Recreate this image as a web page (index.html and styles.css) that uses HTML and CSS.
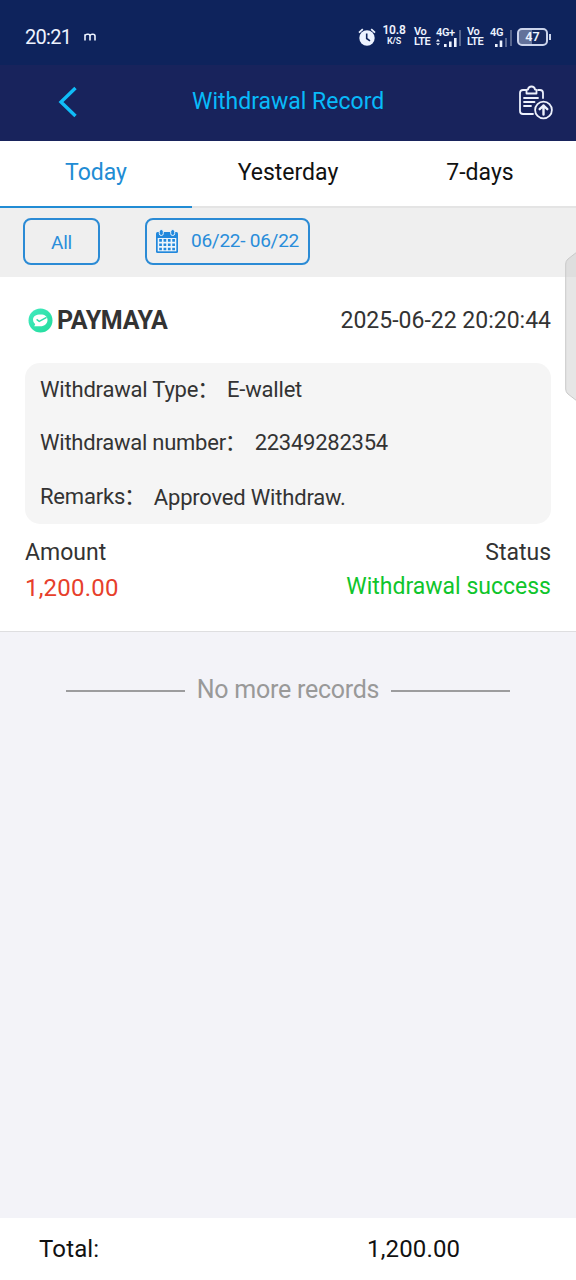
FILE: index.html
```html
<!DOCTYPE html>
<html lang="en">
<head>
<meta charset="utf-8">
<title>Withdrawal Record</title>
<link rel="stylesheet" href="styles.css">
</head>
<body>
<div class="screen">
  <div class="status-bar">
    <span class="clock">20:21</span>
    <svg class="notif" width="12" height="8" viewBox="0 0 12 8"><path d="M1 7.5V1.2M1 3Q1.2 1.2 3.4 1.2H4.3Q6 1.2 6 3V7.5M6 3Q6.2 1.2 8 1.2H9Q11 1.2 11 3V7.5"/></svg>
    <div class="indicators">
      <svg class="alarm" width="18" height="18" viewBox="0 0 18 18"><circle cx="9" cy="10" r="7.7" fill="#edf3ff"/><path d="M1 4.6 4.8 1.2M17 4.6 13.2 1.2" stroke="#edf3ff" stroke-width="1.8"/><path d="M8.7 5.5V10.5L12 12.8" fill="none" stroke="#10245b" stroke-width="1.6"/></svg>
      <div class="stack speed"><b>10.8</b><small>K/S</small></div>
      <div class="stack volte"><b>Vo</b><b>LTE</b></div>
      <div class="stack signal first"><b>4G+</b>
        <svg width="24" height="9" viewBox="0 0 24 9"><path d="M0 3.4 2 1 4 3.4ZM0 5.2H4L2 7.6ZM8 6h2.6v3H8ZM13 3.5h2.6V9H13ZM18 0h2.6v9H18Z" fill="#edf3ff"/></svg></div>
      <svg class="tall-bar" width="2" height="16"><rect width="2" height="16" fill="#58678f"/></svg>
      <div class="stack volte second"><b>Vo</b><b>LTE</b></div>
      <div class="stack signal"><b>4G</b>
        <svg width="18" height="9" viewBox="0 0 18 9"><path d="M5 6h2.6v3H5ZM9.7 2.5h2.6V9H9.7Z" fill="#edf3ff"/><path d="M15 0h2v9h-2Z" fill="#58678f"/></svg></div>
      <svg class="tall-bar" width="2" height="16"><rect width="2" height="16" fill="#58678f"/></svg>
      <div class="battery"><span>47</span></div>
    </div>
  </div>

  <div class="title-bar">
    <svg class="back" width="20" height="32" viewBox="0 0 20 32"><path d="M17.5 2 3 16 17.5 30"/></svg>
    <h1>Withdrawal Record</h1>
    <svg class="export" width="36" height="36" viewBox="0 0 36 36">
      <path d="M8 5H5Q2 5 2 8V26Q2 29 5 29H15M20 5H22Q25 5 25 8V13"/>
      <path d="M8.5 8.5V5.5Q8.5 4.5 10 4.5Q10.5 1.5 13.5 1.5T17 4.5Q18.5 4.5 18.5 5.5V8.5Z"/>
      <path d="M6 13H20M6 17H16.5M6 21H13"/>
      <circle cx="25.5" cy="25" r="8.4"/><path class="arrow" d="M25.5 29.5V20.5M21.7 24.2 25.5 20.5 29.3 24.2"/>
    </svg>
  </div>

  <div class="tabs">
    <div class="tab active">Today</div>
    <div class="tab">Yesterday</div>
    <div class="tab">7-days</div>
  </div>

  <div class="filters">
    <div class="pill all">All</div>
    <div class="pill range">
      <svg width="22" height="24" viewBox="0 0 22 24"><rect x="0" y="3" width="22" height="21" rx="1.5" fill="#2288dc"/><rect x="1.7" y="9" width="18.6" height="13.3" fill="#edf5fb"/>
        <g stroke="#edf5fb" fill="#2288dc"><rect x="3.3" y=".5" width="4" height="6" rx="2"/><rect x="14.7" y=".5" width="4" height="6" rx="2"/></g>
        <path d="M3.2 11.4H19M3.2 15.7H19M3.2 20H19" stroke="#2288dc" stroke-width="2.6" stroke-dasharray="2.7 1.65"/></svg>
      <span>06/22- 06/22</span>
    </div>
  </div>

  <div class="record">
    <div class="record-head">
      <svg width="25" height="25" viewBox="0 0 25 25"><defs><linearGradient id="mint" x2="1" y2="1"><stop stop-color="#43eac0"/><stop offset="1" stop-color="#20dc9b"/></linearGradient></defs><circle cx="12.5" cy="12.5" r="12" fill="url(#mint)"/><path d="M5 11.8C5 8.5 8 6.6 12.5 6.6S19.5 8.5 19.5 12 16.5 18.3 12.5 18.3H6.2L7.2 16.2Q5 14.6 5 11.8Z" fill="#fff"/><path d="M8.6 11.4 11.2 13.3 18.6 9.4" fill="none" stroke="#2bdca9" stroke-width="1.5"/></svg>
      <strong>PAYMAYA</strong>
      <time>2025-06-22 20:20:44</time>
    </div>
    <div class="details">
      <div class="row"><span>Withdrawal Type<span class="colon">：</span></span><span class="value">E-wallet</span></div>
      <div class="row number"><span>Withdrawal number<span class="colon">：</span></span><span class="value">22349282354</span></div>
      <div class="row"><span>Remarks<span class="colon">：</span></span><span class="value remark">Approved Withdraw.</span></div>
    </div>
    <div class="summary labels"><span>Amount</span><span>Status</span></div>
    <div class="summary values"><span class="amount">1,200.00</span><span class="success">Withdrawal success</span></div>
  </div>

  <div class="end"><i></i><span>No more records</span><i></i></div>

  <div class="total"><span>Total:</span><span class="sum">1,200.00</span></div>
  <svg class="edge-handle" width="11" height="152" viewBox="0 0 11 152"><path d="M12 1 3 8Q.7 10 .7 13V138Q.7 141 3 143L12 150Z"/></svg>
</div>
</body>
</html>
```
FILE: styles.css
```css
* { box-sizing: border-box; }
body { margin: 0; font-family: Roboto, "Noto Sans CJK SC", sans-serif; color: #333; }
svg { display: block; flex: none; }
.screen { position: relative; width: 576px; height: 1280px; display: flex; flex-direction: column; background: #f3f3f8; overflow: hidden; white-space: nowrap; }

.status-bar { height: 65px; padding: 8px 25px 0; display: flex; align-items: center; background: #0e235c; color: #edf3ff; }
.clock { font-size: 20px; line-height: 24px; letter-spacing: -.7px; width: 47px; margin-top: 1px; }
.notif { margin-left: 12px; fill: none; stroke: #edf3ff; stroke-width: 1.6; }
.indicators { margin-left: auto; display: flex; align-items: center; height: 24px; }
.alarm { margin-right: 6px; }
.stack { display: flex; flex-direction: column; font-size: 11px; line-height: 11px; }
.stack b { font-weight: 600; }
.speed { width: 24px; align-items: center; font-size: 12px; letter-spacing: -.2px; margin-right: 8px; margin-top: -3px; }
.speed small { font-size: 9px; line-height: 10px; font-weight: 600; }
.volte { width: 17px; font-size: 11px; letter-spacing: -.5px; line-height: 10px; }
.signal { width: 20px; font-size: 11px; letter-spacing: -.4px; }
.first { margin-left: 5px; width: 23px; }
.tall-bar { margin-top: 2px; }
.second { margin-left: 6px; margin-right: 6px; }
.battery { position: relative; width: 31px; height: 18px; margin-left: 5px; margin-right: 3px; border: 2px solid #cbd4eb; border-radius: 5px; background: linear-gradient(90deg, #63729a 47%, #17295e 47%); font-size: 12.5px; font-weight: 600; line-height: 14px; text-align: center; }
.battery::after { content: ""; position: absolute; right: -5px; top: 4px; width: 2px; height: 6px; background: #cbd4eb; }

.title-bar { height: 76px; display: grid; grid-template-columns: 192px 192px 192px; align-items: center; background: #18235c; }
.back { margin-left: 58px; margin-top: -3px; fill: none; stroke: #10bdf8; stroke-width: 3.4; }
h1 { margin: -3px 0 0; font-size: 23px; line-height: 28px; font-weight: 400; color: #08bafa; text-align: center; }
.export { margin-left: 134px; margin-top: -1px; fill: none; stroke: #edf1fc; stroke-width: 1.8; stroke-linecap: round; stroke-linejoin: round; }
.export .arrow { stroke-width: 2.4; }

.tabs { height: 67px; display: grid; grid-template-columns: repeat(3, 1fr); background: #fff; }
.tab { padding-top: 18px; border-bottom: 2px solid #e4e4e4; font-size: 23px; line-height: 28px; text-align: center; color: #111; }
.active { color: #218cd4; border-color: #218cd4; }

.filters { height: 69px; padding: 10px 23px; display: flex; gap: 45px; background: #efefef; }
.pill { height: 47px; display: flex; align-items: center; justify-content: center; border: 2px solid #2b8bd5; border-radius: 8px; color: #298dda; font-size: 19px; letter-spacing: -.25px; }
.all { width: 77px; padding-top: 1px; }
.range { width: 165px; gap: 13px; padding-bottom: 2px; }

.record { height: 355px; padding: 27px 25px 0; background: #fff; border-bottom: 1px solid #dedee0; }
.record-head { height: 32px; display: flex; align-items: center; padding-left: 3px; }
.record-head strong { margin-left: 4px; font-size: 25px; letter-spacing: -.3px; }
time { margin-left: auto; font-size: 23px; }
.details { height: 161px; margin-top: 27px; padding: 0 15px; display: grid; grid-template-rows: repeat(3, 1fr); align-items: center; border-radius: 15px; background: #f5f5f5; }
.row { display: flex; align-items: center; font-size: 22px; letter-spacing: -.2px; line-height: 28px; }
.number { letter-spacing: -.24px; }
.colon { margin-left: -1px; }
.value { margin-left: 8px; }
.remark { margin-top: 1px; }
.summary { display: flex; justify-content: space-between; line-height: 32px; font-size: 23px; }
.labels { margin-top: 13px; }
.values { margin-top: 3px; font-size: 24px; }
.amount { color: #e7402b; letter-spacing: .2px; }
.success { margin-top: -1px; color: #0fc52c; font-size: 23px; }

.end { padding-top: 43px; display: flex; justify-content: center; align-items: center; gap: 12px; font-size: 25px; letter-spacing: -.25px; line-height: 30px; color: #999; }
.end i { width: 119px; height: 2px; background: #9c9c9e; margin-top: 1px; }
.total { height: 62px; margin-top: auto; padding: 0 39px; display: grid; grid-template-columns: 328px 1fr; align-items: center; background: #fff; color: #111; font-size: 24px; letter-spacing: .15px; }
.edge-handle { position: absolute; right: 0; top: 251px; fill: rgba(205, 205, 205, .5); stroke: #c9c9c9; stroke-width: 1; }
```
